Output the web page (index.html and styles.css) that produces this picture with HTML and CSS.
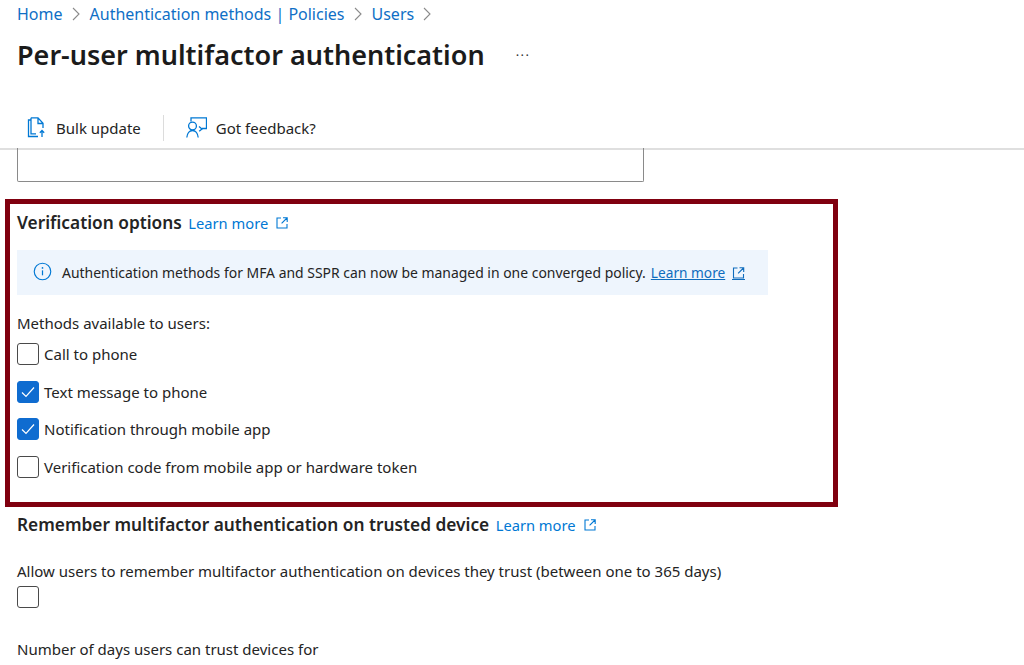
FILE: index.html
```html
<!DOCTYPE html>
<html lang="en">
<head>
<meta charset="utf-8">
<title>Per-user multifactor authentication</title>
<link rel="stylesheet" href="styles.css">
</head>
<body>
<svg class="defs" width="0" height="0" aria-hidden="true">
  <symbol id="ext" viewBox="0 0 12 12"><path d="M5 1H1v10h10V7M7 .8h4.2V5M11 1 5.6 6.4" fill="none" stroke="currentColor" stroke-width="1.1"/></symbol>
  <symbol id="chev" viewBox="0 0 8 14"><path d="M1 1l6 6-6 6" fill="none" stroke="currentColor" stroke-width="1.1"/></symbol>
  <symbol id="tick" viewBox="0 0 14 12"><path d="M1 6.500 5 10.500 13 1.500" fill="none" stroke="currentColor" stroke-width="1.200"/></symbol>
</svg>
<nav class="crumbs">
  <a class="crumb">Home</a><svg class="chev"><use href="#chev"/></svg>
  <a class="crumb">Authentication methods | Policies</a><svg class="chev"><use href="#chev"/></svg>
  <a class="crumb">Users</a><svg class="chev"><use href="#chev"/></svg>
</nav>
<div class="title-row">
  <h1 class="title">Per-user multifactor authentication</h1>
  <span class="more">···</span>
</div>
<div class="toolbar">
  <button class="tool tool-first">
    <svg class="tool-icon" viewBox="0 0 20 21"><path d="M4 3H1.500v16.500H11M4 .8h7l5 5.500V11M4 .8v16h5M11 1v5.500h5M15 20v-6.500M12.800 15.700 15 13.500l2.200 2.200" fill="none" stroke="#0078d4" stroke-width="1.300"/></svg>
    <span>Bulk update</span>
  </button>
  <span class="tool-sep"></span>
  <button class="tool">
    <svg class="tool-icon tool-icon-wide" viewBox="0 0 21 21"><path d="M5 4.500V.8h15.500v10.700H16" fill="none" stroke="#0078d4" stroke-width="1.300"/><circle cx="6.500" cy="9" r="3.900" fill="none" stroke="#0078d4" stroke-width="1.300"/><path d="M.8 20.500c.4-4 2.700-7 5.700-7s5.300 3 5.700 7M13 9.500l3 2.400-2.800 2.400" fill="none" stroke="#0078d4" stroke-width="1.300"/></svg>
    <span>Got feedback?</span>
  </button>
</div>
<div class="search-box"></div>
<section class="highlight">
  <h2 class="section-head">Verification options <a class="link">Learn more<svg class="ext"><use href="#ext"/></svg></a></h2>
  <div class="banner">
    <svg class="info" viewBox="0 0 20 20"><circle cx="10" cy="10" r="8.700" fill="none" stroke="#0078d4" stroke-width="1.200"/><path d="M10 8.800v5.200" stroke="#0078d4" stroke-width="1.300"/><circle cx="10" cy="6.200" r=".9" fill="#0078d4"/></svg>
    <span>Authentication methods for MFA and SSPR can now be managed in one converged policy.</span>
    <a class="link link-under">Learn more<svg class="ext ext-under"><use href="#ext"/></svg></a>
  </div>
  <p class="methods">Methods available to users:</p>
  <div class="check-row"><span class="box"></span><span>Call to phone</span></div>
  <div class="check-row"><span class="box box-on"><svg class="tick"><use href="#tick"/></svg></span><span>Text message to phone</span></div>
  <div class="check-row"><span class="box box-on"><svg class="tick"><use href="#tick"/></svg></span><span>Notification through mobile app</span></div>
  <div class="check-row"><span class="box"></span><span>Verification code from mobile app or hardware token</span></div>
</section>
<section class="lower">
  <h2 class="section-head">Remember multifactor authentication on trusted device <a class="link">Learn more<svg class="ext"><use href="#ext"/></svg></a></h2>
  <p class="allow">Allow users to remember multifactor authentication on devices they trust (between one to 365 days)</p>
  <span class="box box-solo"></span>
  <p class="days">Number of days users can trust devices for</p>
</section>
</body>
</html>
```
FILE: styles.css
```css
* { box-sizing: border-box; }
html, body { margin: 0; padding: 0; height: 665px; overflow: hidden; }
body { background: #fff; color: #242424; font-family: "Noto Sans", "Open Sans", sans-serif; font-size: 15px; line-height: 20px; }
.defs { display: block; height: 0; }
a { color: #0078d4; text-decoration: none; }

.crumbs { display: flex; align-items: center; height: 28px; padding-left: 17px; font-size: 16px; }
.crumb { color: #0f6fc6; }
.chev { width: 8px; height: 14px; margin: 0 10px 0 9px; color: #8a8a8a; }

.title-row { display: flex; align-items: center; height: 54px; padding-left: 17px; }
.title { margin: 0; font-size: 27px; font-weight: 600; line-height: 36px; color: #1b1b1b; }
.more { margin-left: 31px; font-size: 13px; letter-spacing: 1.500px; color: #333; }

.toolbar { display: flex; align-items: center; height: 43px; margin-top: 25px; padding: 0 0 0 27px; border-bottom: 2px solid #dfdfdf; }
.tool { display: flex; align-items: center; padding: 0; border: 0; background: none; font: inherit; font-size: 15px; color: #242424; }
.tool-icon { width: 20px; height: 21px; margin-right: 9px; }
.tool-icon-wide { width: 21px; margin-right: 9px; }
.tool-sep { width: 1px; height: 26px; margin: 0 22px 0 22px; background: #dcdcdc; }

.search-box { width: 627px; height: 34px; margin-left: 17px; margin-top: -2px; border: 1px solid #8a8a8a; border-top: 0; border-radius: 0 0 2px 2px; }

.highlight { width: 833px; height: 308px; margin: 17px 0 0 5px; padding: 5px 0 0 7px; border: 5px solid #80000f; }
.section-head { display: flex; align-items: baseline; margin: 0; font-size: 17.300px; font-weight: 600; line-height: 28px; color: #242424; white-space: pre; }
.section-head .link { margin-left: 2px; font-size: 14.700px; font-weight: 400; }
.link { display: inline-flex; align-items: baseline; color: #0078d4; }
.ext { width: 12px; height: 12px; margin-left: 8px; align-self: center; }
.link-under { margin-left: 5px; font-size: 13.700px; color: #0f6cbd; text-decoration: underline; }
.ext-under { margin-left: 7px; border-bottom: 1px solid #0f6cbd; height: 13px; width: 13px; }

.banner { display: flex; align-items: center; width: 751px; height: 45px; margin: 13px 0 0 0; padding: 1px 0 0 16px; background: #eef5fd; font-size: 13.950px; color: #242424; white-space: nowrap; }
.info { width: 19px; height: 19px; margin: -4px 10px 0 0; }

.methods { margin: 18px 0 0; line-height: 20px; }
.check-row { display: flex; align-items: center; height: 22px; margin-top: 15.500px; }
.methods + .check-row { margin-top: 10px; }
.box { display: inline-flex; align-items: center; justify-content: center; flex: none; width: 22px; height: 22px; margin-right: 5px; border: 1px solid #4a4a4a; border-radius: 3px; background: #fff; }
.box-on { border-color: #0f6cd0; background: #0f6cd0; }
.tick { width: 14px; height: 12px; color: #fff; }

.lower { padding: 4px 0 0 17px; }
.allow { margin: 22px 0 0; line-height: 20px; }
.box-solo { display: block; margin: 5px 0 0; }
.days { margin: 31px 0 0; line-height: 20px; }
```
